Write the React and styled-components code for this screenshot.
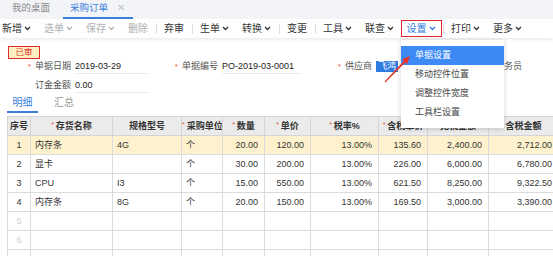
import React from "react";
import styled, { createGlobalStyle } from "styled-components";

const GlobalStyle = createGlobalStyle`
  html, body { margin: 0; padding: 0; background: #fff; }
  body {
    font-family: "Liberation Sans", "Noto Sans CJK SC", sans-serif;
    color: #333;
    -webkit-font-smoothing: antialiased;
  }
  * { box-sizing: border-box; }
`;

const Page = styled.div`
  position: relative;
  width: 553px;
  height: 256px;
  overflow: hidden;
  background: #fff;
`;

const TabBar = styled.div`
  height: 19px;
  background: #f3f4f8;
  display: flex;
  align-items: stretch;
  padding-left: 5px;
`;

const PageTab = styled.div`
  position: relative;
  display: flex;
  align-items: center;
  gap: 9px;
  padding: 0 8px 1px 7px;
  font-size: 9.5px;
  line-height: 1;
  color: ${(p) => (p.$active ? "#3a7fdc" : "#8a8a8a")};
  border-bottom: 2px solid ${(p) => (p.$active ? "#3a7fdc" : "transparent")};
  margin-right: ${(p) => (p.$active ? 0 : 5)}px;
`;

const Close = styled.span`
  color: #c4c4c4;
  font-size: 10px;
`;

const Toolbar = styled.div`
  position: relative;
  z-index: 1;
  height: 19px;
  background: #fff;
  display: flex;
  align-items: center;
  box-shadow: 0 2px 3px rgba(0, 0, 0, 0.07);
`;

const ToolItem = styled.div`
  display: flex;
  align-items: center;
  gap: 2px;
  height: 17px;
  padding: 0 ${(p) => (p.$boxed ? 5 : 6.5)}px;
  font-size: 10px;
  line-height: 1;
  white-space: nowrap;
  color: ${(p) => (p.$disabled ? "#b0b0b0" : p.$boxed ? "#2f7be0" : "#333")};
  border: ${(p) => (p.$boxed ? "1.5px solid #e3262b" : "none")};
  &:first-child { padding-left: 2px; }
`;

const Sep = styled.div`
  width: 1px;
  height: 10px;
  background: #dedede;
  margin: 0 1px;
`;

const Chevron = ({ color }) => (
  <svg width="7" height="5" viewBox="0 0 7 5">
    <polyline points="1,1 3.5,3.5 6,1" fill="none" stroke={color || "currentColor"} strokeWidth="1.3" />
  </svg>
);

const StatusRow = styled.div`
  padding: 3px 0 0 8px;
  height: 16px;
`;

const Badge = styled.div`
  display: inline-flex;
  align-items: center;
  justify-content: center;
  width: 32px;
  height: 13px;
  border: 1.5px solid #e02b2b;
  background: #fcefc4;
  color: #e23a2a;
  font-size: 8.5px;
  line-height: 1;
`;

const FormGrid = styled.div`
  display: grid;
  grid-template-columns: 147px 154px 150px 150px;
  grid-auto-rows: 19px;
  padding: 2px 0 0 26px;
  margin-top: 1px;
`;

const Field = styled.div`
  display: flex;
  align-items: center;
  font-size: 9px;
  line-height: 1;
`;

const Label = styled.div`
  width: 45px;
  text-align: right;
  color: #555;
  white-space: nowrap;
`;

const Star = styled.span`
  color: #e5533d;
  font-size: 8px;
  margin-right: 4px;
`;

const Value = styled.div`
  margin-left: 4px;
  width: ${(p) => p.$w || 74}px;
  height: 15px;
  display: flex;
  align-items: center;
  border-bottom: ${(p) => (p.$line ? "1px solid #ececec" : "none")};
  color: #222;
  white-space: nowrap;
`;

const Selected = styled.span`
  background: #2f7be0;
  color: #fff;
  padding: 1px 2px;
`;

const DetailTabs = styled.div`
  display: flex;
  padding-left: 7px;
  height: 18px;
`;

const DetailTab = styled.div`
  width: ${(p) => (p.$active ? 31 : 38)}px;
  display: flex;
  justify-content: center;
  align-items: center;
  font-size: 10px;
  line-height: 1;
  color: ${(p) => (p.$active ? "#3a7fdc" : "#999")};
  border-bottom: 2px solid ${(p) => (p.$active ? "#3a7fdc" : "transparent")};
  margin-right: ${(p) => (p.$active ? 7 : 0)}px;
`;

const TableWrap = styled.div`
  margin-top: 3px;
  padding-left: 7px;
`;

const Table = styled.table`
  border-collapse: collapse;
  table-layout: fixed;
  width: 551px;
  font-size: 9px;
  line-height: 1;
`;

const Th = styled.th`
  height: 19px;
  background: #ebebeb;
  border: 1px solid #d4d4d4;
  font-weight: bold;
  color: #333;
  text-align: center;
  white-space: nowrap;
  overflow: hidden;
  padding: 0;
`;

const HStar = styled.span`
  color: #e5533d;
  font-weight: normal;
  font-size: 7px;
  vertical-align: 2px;
  margin-right: 2px;
`;

const Tr = styled.tr`
  background: ${(p) => (p.$hl ? "#fdf2cd" : "#fff")};
`;

const Td = styled.td`
  height: 19px;
  border: 1px solid #dcdcdc;
  padding: 0 ${(p) => (p.$num ? "6px" : "4px")} 0 ${(p) => (p.$num ? "2px" : "4px")};
  text-align: ${(p) => (p.$num ? "right" : p.$center ? "center" : "left")};
  color: ${(p) => (p.$faint ? "#cfcfcf" : "#333")};
  white-space: nowrap;
  overflow: hidden;
`;

const Menu = styled.div`
  position: absolute;
  left: 401px;
  top: 40px;
  width: 103px;
  padding: 6px 0;
  background: #fff;
  box-shadow: 0 1px 5px rgba(0, 0, 0, 0.18);
  z-index: 5;
`;

const MenuItem = styled.div`
  height: 19px;
  display: flex;
  align-items: center;
  padding-left: 14px;
  font-size: 9px;
  line-height: 1;
  color: ${(p) => (p.$active ? "#fff" : "#444")};
  background: ${(p) => (p.$active ? "#3d8af5" : "transparent")};
`;

const ArrowMark = styled.svg`
  position: absolute;
  left: 380px;
  top: 50px;
  z-index: 6;
`;

const tools = [
  { t: "新增", c: true },
  { t: "选单", c: true, d: true },
  { t: "保存", c: true, d: true },
  { t: "删除", d: true },
  "|",
  { t: "弃审" },
  "|",
  { t: "生单", c: true },
  { t: "转换", c: true },
  "|",
  { t: "变更" },
  "|",
  { t: "工具", c: true },
  { t: "联查", c: true },
  { t: "设置", c: true, b: true },
  "|",
  { t: "打印", c: true },
  { t: "更多", c: true },
];

const cols = [
  { w: 23, h: "序号" },
  { w: 82, h: "存货名称", s: true },
  { w: 69, h: "规格型号" },
  { w: 41, h: "采购单位", s: true },
  { w: 42, h: "数量", s: true },
  { w: 46, h: "单价", s: true },
  { w: 68, h: "税率%", s: true },
  { w: 49, h: "含税单价", s: true },
  { w: 61, h: "无税金额" },
  { w: 70, h: "含税金额" },
];

const rows = [
  ["内存条", "4G", "个", "20.00", "120.00", "13.00%", "135.60", "2,400.00", "2,712.00"],
  ["显卡", "", "个", "30.00", "200.00", "13.00%", "226.00", "6,000.00", "6,780.00"],
  ["CPU", "I3", "个", "15.00", "550.00", "13.00%", "621.50", "8,250.00", "9,322.50"],
  ["内存条", "8G", "个", "20.00", "150.00", "13.00%", "169.50", "3,000.00", "3,390.00"],
];

export default function App() {
  return (
    <Page>
      <GlobalStyle />
      <TabBar>
        <PageTab>我的桌面</PageTab>
        <PageTab $active>
          采购订单<Close>✕</Close>
        </PageTab>
      </TabBar>
      <Toolbar>
        {tools.map((it, i) =>
          it === "|" ? (
            <Sep key={i} />
          ) : (
            <ToolItem key={i} $disabled={it.d} $boxed={it.b}>
              {it.t}
              {it.c && <Chevron />}
            </ToolItem>
          )
        )}
      </Toolbar>
      <StatusRow>
        <Badge>已审</Badge>
      </StatusRow>
      <FormGrid>
        <Field>
          <Label><Star>*</Star>单据日期</Label>
          <Value $line>2019-03-29</Value>
        </Field>
        <Field>
          <Label><Star>*</Star>单据编号</Label>
          <Value $line $w={80}>PO-2019-03-0001</Value>
        </Field>
        <Field>
          <Label><Star>*</Star>供应商</Label>
          <Value $w={70}><Selected>飞鸿</Selected></Value>
        </Field>
        <Field>
          <Label><Star>*</Star>业务员</Label>
          <Value $w={60} />
        </Field>
        <Field>
          <Label>订金金额</Label>
          <Value $line>0.00</Value>
        </Field>
      </FormGrid>
      <DetailTabs>
        <DetailTab $active>明细</DetailTab>
        <DetailTab>汇总</DetailTab>
      </DetailTabs>
      <TableWrap>
        <Table>
          <colgroup>
            {cols.map((c, i) => (
              <col key={i} style={{ width: c.w }} />
            ))}
          </colgroup>
          <thead>
            <tr>
              {cols.map((c, i) => (
                <Th key={i}>
                  {c.s && <HStar>*</HStar>}
                  {c.h}
                </Th>
              ))}
            </tr>
          </thead>
          <tbody>
            {rows.map((r, i) => (
              <Tr key={i} $hl={i === 0}>
                <Td $center>{i + 1}</Td>
                <Td>{r[0]}</Td>
                <Td>{r[1]}</Td>
                <Td>{r[2]}</Td>
                {r.slice(3).map((v, j) => (
                  <Td key={j} $num>{v}</Td>
                ))}
              </Tr>
            ))}
            {[5, 6].map((n) => (
              <Tr key={n}>
                <Td $center $faint>{n}</Td>
                {Array.from({ length: 9 }).map((_, j) => (
                  <Td key={j} />
                ))}
              </Tr>
            ))}
            <Tr>
              {Array.from({ length: 10 }).map((_, j) => (
                <Td key={j} />
              ))}
            </Tr>
          </tbody>
        </Table>
      </TableWrap>
      <Menu>
        <MenuItem $active>单据设置</MenuItem>
        <MenuItem>移动控件位置</MenuItem>
        <MenuItem>调整控件宽度</MenuItem>
        <MenuItem>工具栏设置</MenuItem>
      </Menu>
      <ArrowMark width="34" height="36" viewBox="0 0 34 36">
        <polygon
          points="4.6,31.6 23.8,11.1 22,9.4 30,6 27,14.2 25.2,12.5 5.4,32.4"
          fill="#e8322b"
        />
      </ArrowMark>
    </Page>
  );
}
